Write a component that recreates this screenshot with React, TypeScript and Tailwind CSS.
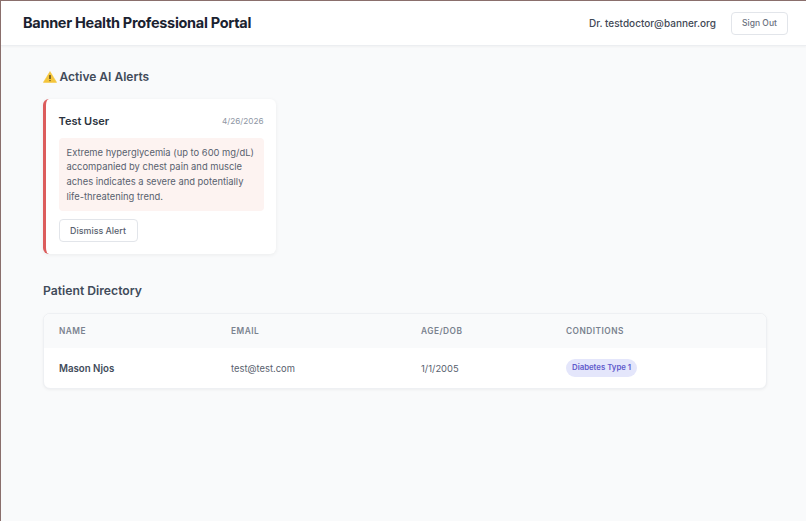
export default function App() {
  return (
    <div className="h-[521px] overflow-hidden bg-[#f9fafb] border-t border-l border-[#8a6f6c] font-['Inter',sans-serif] text-[#1f2937] antialiased">
      <header className="h-[45px] bg-white border-b border-[#eceef1] shadow-[0_1px_2px_rgba(0,0,0,0.04)] flex items-center justify-between pl-[22px] pr-[18px]">
        <h1 className="text-[14.5px] font-bold text-[#1a2230] tracking-[-0.3px]">Banner Health Professional Portal</h1>
        <div className="flex items-center gap-[15px]">
          <span className="text-[10px] font-medium text-[#3f4855]">Dr. testdoctor@banner.org</span>
          <button className="h-[23px] w-[57px] rounded-[4px] border border-[#e2e5ea] bg-white text-[8.5px] font-medium text-[#6b7280]">Sign Out</button>
        </div>
      </header>

      <main className="pl-[42px] pr-[39px] pt-[22px]">
        <h2 className="flex items-center gap-[2.5px] text-[12px] font-semibold text-[#414b5a] leading-[18px]">
          <svg width="14" height="12" viewBox="0 0 14 12">
            <path d="M7 0.6 L13.6 11.4 H0.4 Z" fill="#f5c63c" stroke="#f5c63c" strokeWidth="0.6" strokeLinejoin="round" />
            <rect x="6.35" y="3.9" width="1.3" height="4.2" rx="0.4" fill="#3d3420" />
            <rect x="6.35" y="8.9" width="1.3" height="1.3" rx="0.6" fill="#3d3420" />
          </svg>
          Active AI Alerts
        </h2>

        <div className="mt-[13px] w-[233px] h-[155px] rounded-[6px] border-l-[3px] border-[#dc5c5c] bg-white shadow-[0_1px_4px_rgba(0,0,0,0.06)] px-[12.5px] pt-[14px]">
          <div className="flex items-center justify-between">
            <span className="text-[11px] font-semibold text-[#2b3340]">Test User</span>
            <span className="text-[8.2px] text-[#8f97a4]">4/26/2026</span>
          </div>
          <p className="mt-[8px] rounded-[4px] bg-[#fdf3f1] px-[8px] pt-[8px] pb-[7px] text-[9.4px] leading-[14.7px] text-[#58616e]">
            Extreme hyperglycemia (up to 600 mg/dL) accompanied by chest pain and muscle aches indicates a severe and potentially life-threatening trend.
          </p>
          <button className="mt-[8px] h-[23px] w-[79px] rounded-[4px] border border-[#e2e5ea] bg-white text-[8.9px] font-medium text-[#58616e]">Dismiss Alert</button>
        </div>

        <h2 className="mt-[28px] text-[12.2px] font-semibold text-[#414b5a] leading-[18px]">Patient Directory</h2>

        <div className="mt-[13px] h-[76px] overflow-hidden rounded-[7px] border border-[#eef0f3] bg-white shadow-[0_1px_3px_rgba(0,0,0,0.05)]">
          <table className="w-full table-fixed text-left">
            <thead className="bg-[#f9fafb]">
              <tr className="h-[34px] text-[8.3px] font-semibold tracking-[0.5px] text-[#7a828f]">
                <th className="w-[187px] pl-[15px] font-semibold">NAME</th>
                <th className="w-[190px] font-semibold">EMAIL</th>
                <th className="w-[145px] font-semibold">AGE/DOB</th>
                <th className="font-semibold">CONDITIONS</th>
              </tr>
            </thead>
            <tbody>
              <tr className="h-[40px] text-[9.4px] text-[#58616e]">
                <td className="pl-[15px] pt-[3px] text-[9.7px] font-semibold text-[#414b5a]">Mason Njos</td>
                <td className="pt-[3px]">test@test.com</td>
                <td className="pt-[3px]">1/1/2005</td>
                <td>
                  <span className="inline-block rounded-full bg-[#e4e6fb] px-[6px] py-[3px] text-[7.8px] font-semibold text-[#5f5acb]">Diabetes Type 1</span>
                </td>
              </tr>
            </tbody>
          </table>
        </div>
      </main>
    </div>
  );
}
